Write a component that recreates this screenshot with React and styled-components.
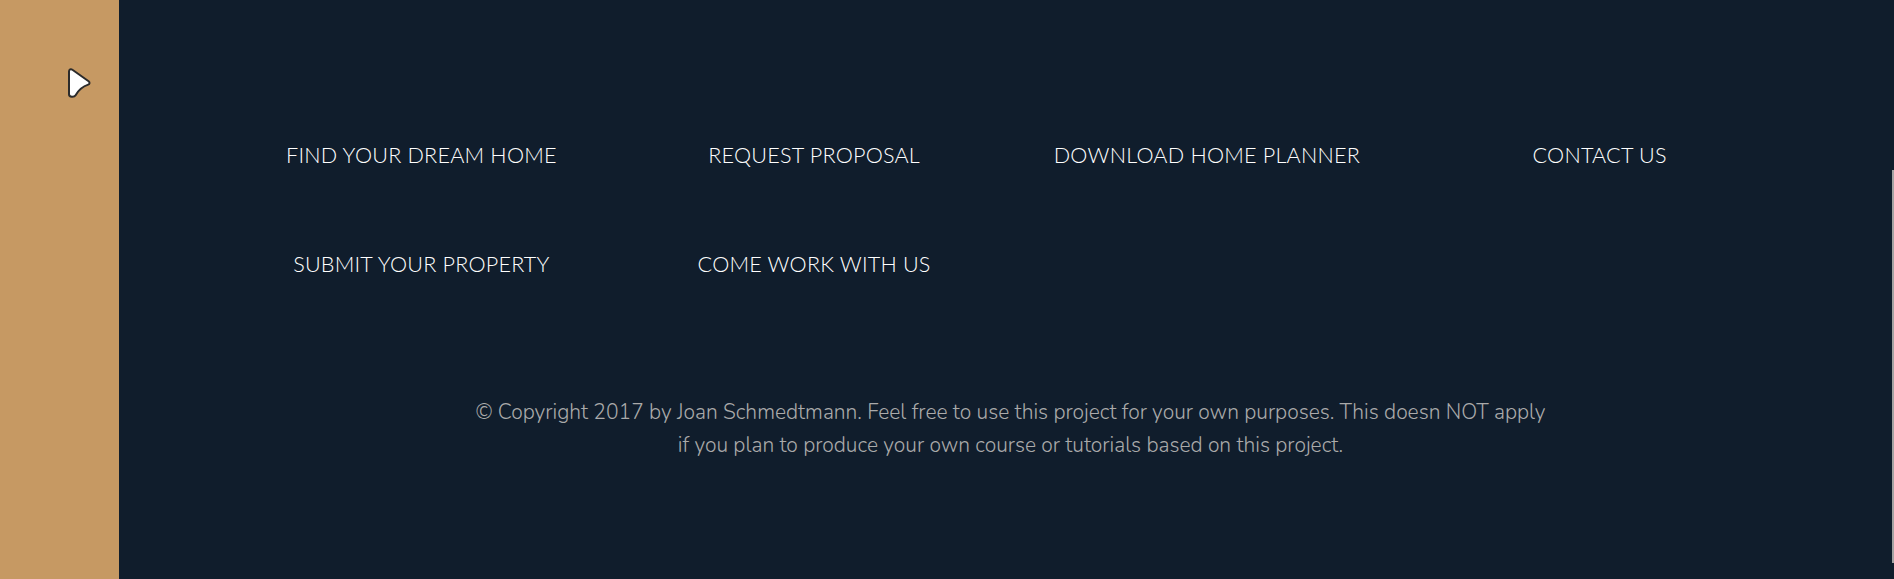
import styled, {createGlobalStyle} from "styled-components";

const GlobalStyle = createGlobalStyle`
  html, body {
    margin: 0;
    padding: 0;
    height: 100%;
    background-color: #101d2c;
  }
  #root {
    height: 100%;
  }
`;

const Container = styled.div`
  display: grid;
  grid-template-columns: 119px 1fr;
  height: 579px;
  overflow: hidden;
  position: relative;
`;

const Sidebar = styled.div`
  background-color: #c69963;
  display: flex;
  justify-content: flex-start;
  padding: 67px 0 0 66px;
  box-sizing: border-box;
`;

const NavButton = styled.button`
  width: 26px;
  height: 32px;
  padding: 0;
  border: none;
  background: transparent;
  cursor: pointer;
`;

const Footer = styled.footer`
  background-color: #101d2c;
  padding: 125px 98px 0 106px;
  display: flex;
  flex-direction: column;
  align-items: center;
`;

const Nav = styled.ul`
  list-style: none;
  margin: 0;
  padding: 0;
  width: 100%;
  display: grid;
  grid-template-columns: repeat(4, 1fr);
  row-gap: 49px;
  align-items: center;
`;

const NavLink = styled.a`
  display: block;
  padding: 18px 0;
  font-family: Lato, "Open Sans", sans-serif;
  font-weight: 300;
  font-size: 21.6px;
  line-height: 24px;
  color: #ffffff;
  text-transform: uppercase;
  text-align: center;
  text-decoration: none;
  letter-spacing: 0.2px;
`;

const Copyright = styled.p`
  margin: 102px 0 0;
  max-width: 1078px;
  font-family: "Nunito", "Open Sans", sans-serif;
  font-weight: 300;
  font-size: 21px;
  line-height: 33px;
  color: #aaaaaa;
  text-align: center;
`;

const ScrollThumb = styled.div`
  position: absolute;
  right: 0;
  top: 170px;
  bottom: 16px;
  width: 2px;
  background-color: #a3a3a3;
`;

const links = [
    "Find your dream home",
    "Request proposal",
    "Download home planner",
    "Contact us",
    "Submit your property",
    "Come work with us",
];

function App() {
    return (
        <>
            <GlobalStyle/>
            <Container>
                <Sidebar>
                    <NavButton aria-label="menu">
                        <svg width="26" height="32" viewBox="0 0 26 32">
                            <path
                                d="M3 4.5 C3 2.5 4.8 1.6 6.4 2.8 L22.6 14.2 C24 15.2 23.8 17.1 22.2 17.6 C17 19.2 12.6 23 9.6 28.2 C8.2 30.6 3 30.4 3 27.2 Z"
                                fill="#ffffff"
                                stroke="#2b2b2b"
                                strokeWidth="2"
                                strokeLinejoin="round"
                            />
                        </svg>
                    </NavButton>
                </Sidebar>
                <Footer>
                    <Nav>
                        {links.map((link) => (
                            <li key={link}>
                                <NavLink href="#">{link}</NavLink>
                            </li>
                        ))}
                    </Nav>
                    <Copyright>
                        &copy; Copyright 2017 by Joan Schmedtmann. Feel free to use this project for your own purposes. This doesn NOT apply if you plan to produce your own course or tutorials based on this project.
                    </Copyright>
                </Footer>
                <ScrollThumb/>
            </Container>
        </>
    );
}

export default App;
